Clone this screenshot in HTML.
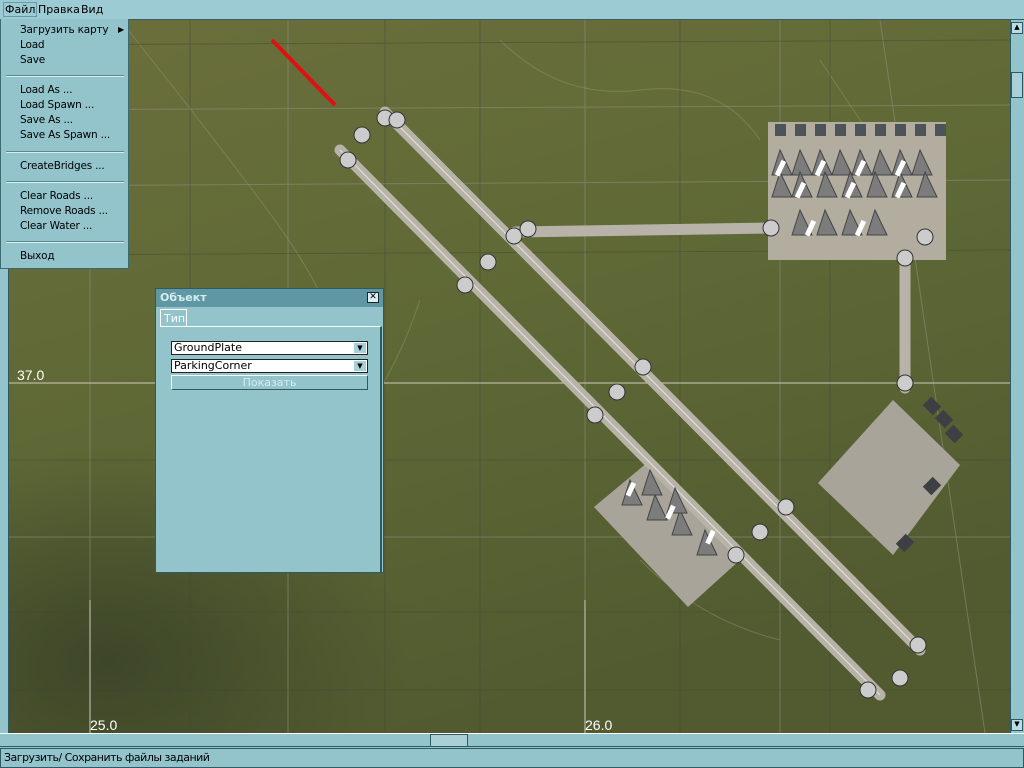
<!DOCTYPE html>
<html><head><meta charset="utf-8"><style>
*{margin:0;padding:0;box-sizing:border-box}
body{width:1024px;height:768px;overflow:hidden;position:relative;background:#93c4cc;font-family:"DejaVu Sans","Liberation Sans",sans-serif;font-size:11px;color:#000}
.abs{position:absolute}
#menubar{left:0;top:0;width:1024px;height:20px;background:#9ccbd3;border-bottom:1px solid #3a5a60}
#menubar span{position:absolute;top:3px;font-size:11px}
#menu{left:0;top:19px;width:129px;height:250px;background:#93c4cc;border:1px solid #3c6a72;border-top:none}
#menu div.i{position:absolute;left:19px;font-size:10.5px;letter-spacing:-0.2px}
#menu .sep{position:absolute;left:5px;width:118px;height:2px;border-top:1px solid #5d8a92;border-bottom:1px solid #d8eef2}
#dlg{left:155px;top:288px;width:229px;height:285px;background:#93c4cc;border:1px solid #2f5a62}
</style></head><body>
<svg class="abs" style="left:8px;top:20px" width="1002" height="713" viewBox="8 20 1002 713">
<defs><linearGradient id="g" x1="0" y1="0" x2="0.4" y2="1"><stop offset="0" stop-color="#6b6f3c"/><stop offset="0.5" stop-color="#5f6936"/><stop offset="1" stop-color="#525b30"/></linearGradient>
<radialGradient id="d" cx="0.1" cy="0.9" r="0.3"><stop offset="0" stop-color="#3d4628"/><stop offset="1" stop-color="#3d4628" stop-opacity="0"/></radialGradient></defs>
<rect x="8" y="20" width="1002" height="713" fill="url(#g)"/>
<rect x="8" y="20" width="1002" height="713" fill="url(#d)"/>
<g stroke="#a9a78a" stroke-width="1" fill="none" opacity="0.35">
<path d="M120 20 Q200 120 260 200 T330 320"/><path d="M500 40 Q560 100 640 90 T760 140"/><path d="M420 300 Q380 420 300 480"/><path d="M640 560 Q700 620 780 640"/><path d="M820 60 Q860 120 900 180"/><path d="M200 420 Q260 520 380 560"/>
</g>
<g stroke="#8a8f7a" stroke-width="1" opacity="0.6">
<line x1="8" y1="110" x2="1010" y2="105"/><line x1="8" y1="186" x2="1010" y2="180"/><line x1="8" y1="537" x2="1010" y2="537"/>
<line x1="90" y1="20" x2="90" y2="733"/><line x1="288" y1="20" x2="288" y2="733"/><line x1="585" y1="20" x2="585" y2="733"/><line x1="780" y1="20" x2="780" y2="733"/><line x1="880" y1="20" x2="985" y2="733"/>
</g>
<g stroke="#3e4636" stroke-width="1" opacity="0.45">
<line x1="8" y1="45" x2="1010" y2="40"/><line x1="8" y1="255" x2="1010" y2="250"/><line x1="8" y1="460" x2="1010" y2="460"/><line x1="8" y1="612" x2="1010" y2="612"/><line x1="8" y1="690" x2="1010" y2="690"/>
<line x1="190" y1="20" x2="190" y2="733"/><line x1="385" y1="20" x2="385" y2="733"/><line x1="480" y1="20" x2="480" y2="733"/><line x1="680" y1="20" x2="680" y2="733"/><line x1="830" y1="20" x2="830" y2="733"/>
</g>
<g stroke="#cfcbbe" stroke-width="1"><line x1="8" y1="383" x2="1010" y2="383"/><line x1="90" y1="600" x2="90" y2="733"/><line x1="585" y1="600" x2="585" y2="733"/></g>
<rect x="768" y="122" width="178" height="138" fill="#b3ada0"/>
<polygon points="818,483 893,400 960,465 893,555" fill="#a9a49a"/>
<polygon points="594,507 648,462 740,560 688,607" fill="#a9a49a"/>
<g stroke="#b8b3a8" stroke-width="11" stroke-linecap="round">
<line x1="340" y1="150" x2="880" y2="695"/><line x1="385" y1="112" x2="920" y2="650"/>
<line x1="515" y1="232" x2="770" y2="228"/><line x1="905" y1="258" x2="905" y2="388"/>
</g>
<g stroke="#e0ddd4" stroke-width="1.2"><line x1="340" y1="150" x2="880" y2="695"/><line x1="385" y1="112" x2="920" y2="650"/></g>
<line x1="272" y1="40" x2="335" y2="105" stroke="#e01010" stroke-width="4"/>
<g fill="#4c5458"><rect x="775" y="124" width="11" height="12"/><rect x="795" y="124" width="11" height="12"/><rect x="815" y="124" width="11" height="12"/><rect x="835" y="124" width="11" height="12"/><rect x="855" y="124" width="11" height="12"/><rect x="875" y="124" width="11" height="12"/><rect x="895" y="124" width="11" height="12"/><rect x="915" y="124" width="11" height="12"/><rect x="935" y="124" width="11" height="12"/></g>
<g fill="#7c7c7c" stroke="#444"><polygon points="780,150 772,175 792,175"/><polygon points="800,150 792,175 812,175"/><polygon points="820,150 812,175 832,175"/><polygon points="840,150 832,175 852,175"/><polygon points="860,150 852,175 872,175"/><polygon points="880,150 872,175 892,175"/><polygon points="900,150 892,175 912,175"/><polygon points="920,150 912,175 932,175"/>
<polygon points="780,172 772,197 792,197"/><polygon points="800,172 792,197 812,197"/><polygon points="825,172 817,197 837,197"/><polygon points="850,172 842,197 862,197"/><polygon points="875,172 867,197 887,197"/><polygon points="900,172 892,197 912,197"/><polygon points="925,172 917,197 937,197"/>
<polygon points="800,210 792,235 812,235"/><polygon points="825,210 817,235 837,235"/><polygon points="850,210 842,235 862,235"/><polygon points="875,210 867,235 887,235"/>
<polygon points="630,480 622,505 642,505"/><polygon points="655,495 647,520 667,520"/><polygon points="680,510 672,535 692,535"/><polygon points="705,530 697,555 717,555"/><polygon points="650,470 642,495 662,495"/><polygon points="675,488 667,513 687,513"/></g>
<g fill="#fff"><rect x="778" y="160" width="5" height="16" transform="rotate(25 780 168)"/><rect x="818" y="160" width="5" height="16" transform="rotate(25 820 168)"/><rect x="858" y="160" width="5" height="16" transform="rotate(25 860 168)"/><rect x="898" y="160" width="5" height="16" transform="rotate(25 900 168)"/><rect x="798" y="182" width="5" height="16" transform="rotate(25 800 190)"/><rect x="848" y="182" width="5" height="16" transform="rotate(25 850 190)"/><rect x="898" y="182" width="5" height="16" transform="rotate(25 900 190)"/><rect x="808" y="220" width="5" height="16" transform="rotate(25 810 228)"/><rect x="858" y="220" width="5" height="16" transform="rotate(25 860 228)"/><rect x="628" y="482" width="5" height="14" transform="rotate(25 630 490)"/><rect x="668" y="505" width="5" height="14" transform="rotate(25 670 512)"/><rect x="708" y="530" width="5" height="14" transform="rotate(25 710 537)"/></g>
<g fill="#ccc" stroke="#333"><circle cx="362" cy="135" r="8"/><circle cx="385" cy="118" r="8"/><circle cx="397" cy="120" r="8"/><circle cx="348" cy="160" r="8"/><circle cx="514" cy="236" r="8"/><circle cx="528" cy="229" r="8"/><circle cx="488" cy="262" r="8"/><circle cx="465" cy="285" r="8"/><circle cx="643" cy="367" r="8"/><circle cx="617" cy="392" r="8"/><circle cx="595" cy="415" r="8"/><circle cx="786" cy="507" r="8"/><circle cx="760" cy="532" r="8"/><circle cx="736" cy="555" r="8"/><circle cx="771" cy="228" r="8"/><circle cx="925" cy="237" r="8"/><circle cx="905" cy="258" r="8"/><circle cx="905" cy="383" r="8"/><circle cx="918" cy="645" r="8"/><circle cx="900" cy="678" r="8"/><circle cx="868" cy="690" r="8"/></g>
<g fill="#3c4044"><rect x="925" y="400" width="14" height="12" transform="rotate(45 932 406)"/><rect x="937" y="413" width="14" height="12" transform="rotate(45 944 419)"/><rect x="947" y="428" width="14" height="12" transform="rotate(45 954 434)"/><rect x="925" y="480" width="14" height="12" transform="rotate(-45 932 486)"/><rect x="898" y="537" width="14" height="12" transform="rotate(-45 905 543)"/></g>
<g fill="#fff" font-family="Liberation Sans,sans-serif" font-size="14"><text x="17" y="380">37.0</text><text x="90" y="730">25.0</text><text x="585" y="730">26.0</text></g>
</svg>
<div class="abs" style="left:0;top:20px;width:9px;height:713px;background:#93c4cc;border-right:1px solid #2f5a62"></div>
<div class="abs" style="left:1010px;top:20px;width:14px;height:713px;background:#93c4cc;border-left:1px solid #2f5a62"></div>
<div class="abs" style="left:1011px;top:22px;width:12px;height:12px;background:#b9dde3;border:1px solid #2f5a62;font-size:7px;text-align:center">▲</div>
<div class="abs" style="left:1011px;top:72px;width:12px;height:26px;background:#a9d0d7;border:1px solid #2f5a62"></div>
<div class="abs" style="left:1011px;top:719px;width:12px;height:12px;background:#b9dde3;border:1px solid #2f5a62;font-size:7px;text-align:center">▼</div>
<div class="abs" style="left:0;top:733px;width:1024px;height:14px;background:#93c4cc;border-top:1px solid #fff;border-bottom:1px solid #2f5a62"></div>
<div class="abs" style="left:430px;top:734px;width:38px;height:13px;background:#a9d0d7;border:1px solid #2f5a62"></div>
<div class="abs" style="left:0;top:748px;width:1024px;height:20px;background:#93c4cc;border:1px solid #2f5a62"><span style="position:absolute;left:3px;top:2px;font-size:11px;letter-spacing:-0.5px">Загрузить/ Сохранить файлы заданий</span></div>
<div id="menubar" class="abs"><span style="left:3px;border:1px solid #6a9aa2;padding:0 1px;top:2px">Файл</span><span style="left:38px">Правка</span><span style="left:81px">Вид</span></div>
<div id="menu" class="abs">
<div class="i" style="top:5px">Загрузить карту</div><div class="abs" style="left:117px;top:6px;font-size:8px">▶</div>
<div class="i" style="top:20px">Load</div><div class="i" style="top:35px">Save</div>
<div class="sep" style="top:56px"></div>
<div class="i" style="top:65px">Load As ...</div><div class="i" style="top:80px">Load Spawn ...</div><div class="i" style="top:95px">Save As ...</div><div class="i" style="top:110px">Save As Spawn ...</div>
<div class="sep" style="top:132px"></div>
<div class="i" style="top:141px">CreateBridges ...</div>
<div class="sep" style="top:162px"></div>
<div class="i" style="top:171px">Clear Roads ...</div><div class="i" style="top:186px">Remove Roads ...</div><div class="i" style="top:201px">Clear Water ...</div>
<div class="sep" style="top:222px"></div>
<div class="i" style="top:231px">Выход</div>
</div>
<div id="dlg" class="abs">
<div class="abs" style="left:0;top:0;width:227px;height:18px;background:#5f98a4;color:#d6ecef;font-weight:bold;padding:2px 4px;font-size:11px">Объект</div>
<div class="abs" style="left:211px;top:3px;width:12px;height:11px;background:#d8eef2;border:1px solid #222;font-size:9px;line-height:9px;text-align:center;font-weight:bold">✕</div>
<div class="abs" style="left:4px;top:20px;width:27px;height:18px;border:1px solid #fff;border-bottom:none;color:#fff;padding:2px 3px">Тип</div>
<div class="abs" style="left:4px;top:37px;width:222px;height:246px;border-top:1px solid #fff;border-right:2px solid #2f5a62"></div>
<div class="abs" style="left:15px;top:52px;width:197px;height:14px;background:#fff;border:1px solid #222;padding-left:2px;line-height:12px">GroundPlate<span style="position:absolute;right:1px;top:1px;width:12px;height:10px;background:#a9d0d7;font-size:7px;text-align:center;line-height:10px">▼</span></div>
<div class="abs" style="left:15px;top:70px;width:197px;height:14px;background:#fff;border:1px solid #222;padding-left:2px;line-height:12px">ParkingCorner<span style="position:absolute;right:1px;top:1px;width:12px;height:10px;background:#a9d0d7;font-size:7px;text-align:center;line-height:10px">▼</span></div>
<div class="abs" style="left:15px;top:86px;width:197px;height:15px;background:#93c4cc;border:1px solid #fff;border-right-color:#2f5a62;border-bottom-color:#2f5a62;color:#d6ecef;text-align:center;line-height:13px">Показать</div>
</div>
</body></html>
